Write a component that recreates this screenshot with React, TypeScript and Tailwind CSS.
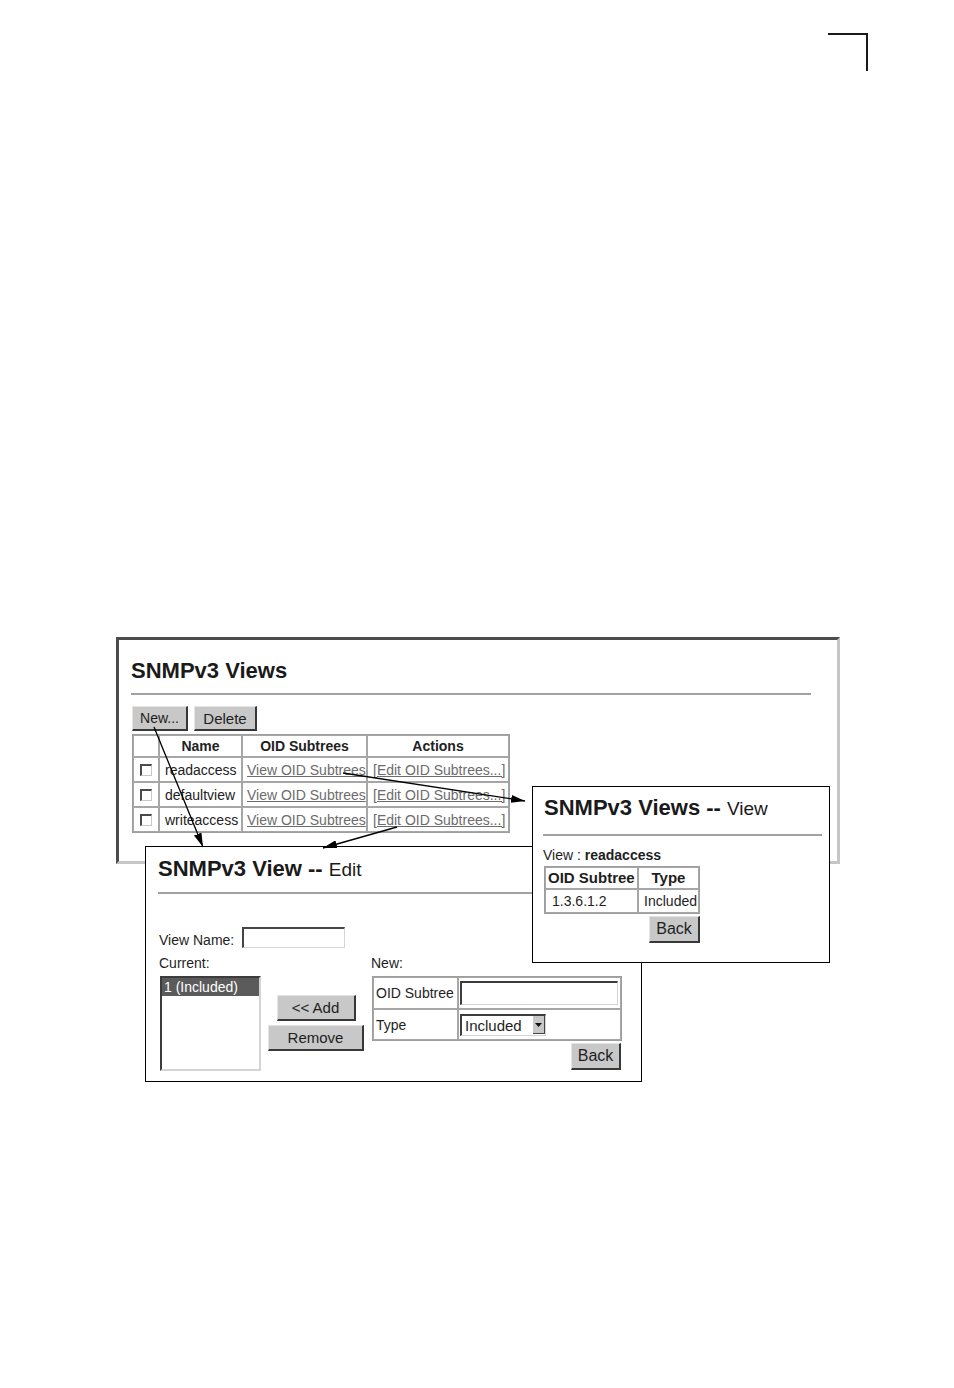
import React from 'react';

const Btn: React.FC<{ className?: string; children: React.ReactNode }> = ({ className = '', children }) => (
  <button
    type="button"
    className={`flex items-center justify-center bg-[#c8c8c8] border border-r-2 border-b-2 border-t-[#e4e4e4] border-l-[#e4e4e4] border-r-[#383838] border-b-[#383838] text-[#1e1e1e] leading-none ${className}`}
  >
    {children}
  </button>
);

const Check = () => (
  <span className="block w-[12px] h-[12px] mx-auto bg-white border-t-2 border-l-2 border-r border-b border-t-[#4a4a4a] border-l-[#4a4a4a] border-r-[#c8c8c8] border-b-[#c8c8c8]" />
);

// cell border only; padding is set per cell
const cell = 'border border-[#a6a6a6] whitespace-nowrap';
const link = 'text-[#6c6c6c] underline';

const rows = ['readaccess', 'defaultview', 'writeaccess'];

const MainWindow = () => (
  <div className="absolute left-0 top-0 w-[724px] h-[227px] bg-white border-t-[3px] border-l-[3px] border-r-[3px] border-b-[3px] border-t-[#4c4c4c] border-l-[#4c4c4c] border-r-[#c6c6c6] border-b-[#c6c6c6] pl-[12px] pt-[18px]">
    <h1 className="text-[22px] leading-[25px] font-bold text-[#1a1a1a]">SNMPv3 Views</h1>
    <div className="mt-[10px] h-[2px] w-[680px] bg-[#a2a2a2]" />
    <div className="mt-[11px] ml-[1px] flex gap-[6px]">
      <Btn className="w-[56px] h-[25px] text-[14px]">New...</Btn>
      <Btn className="w-[63px] h-[25px] text-[15px]">Delete</Btn>
    </div>
    <table className="mt-[3px] ml-[1px] w-[376px] table-fixed border-separate border-spacing-0 border border-[#9e9e9e] text-[14px] leading-[16px] text-[#222]">
      <thead>
        <tr className="h-[22px]">
          <th className={`${cell} w-[26px]`} />
          <th className={`${cell} w-[83px] font-bold text-center`}>Name</th>
          <th className={`${cell} w-[125px] font-bold text-center`}>OID Subtrees</th>
          <th className={`${cell} w-[142px] font-bold text-center`}>Actions</th>
        </tr>
      </thead>
      <tbody>
        {rows.map((r) => (
          <tr key={r} className="h-[25px]">
            <td className={cell}>
              <Check />
            </td>
            <td className={`${cell} pl-[5px]`}>{r}</td>
            <td className={`${cell} pl-[4px]`}>
              <span className={link}>View OID Subtrees</span>
            </td>
            <td className={`${cell} pl-[5px]`}>
              <span className={link}>[Edit OID Subtrees...]</span>
            </td>
          </tr>
        ))}
      </tbody>
    </table>
  </div>
);

const EditWindow = () => (
  <div className="absolute left-[29px] top-[209px] w-[497px] h-[236px] bg-white border border-black pl-[12px] pt-[9px] text-[#1e1e1e]">
    <h2 className="leading-[25px] text-[#1a1a1a]">
      <span className="text-[22px] font-bold">SNMPv3 View -- </span>
      <span className="text-[19px]">Edit</span>
    </h2>
    <div className="mt-[9px] h-[2px] w-[471px] bg-[#a2a2a2]" />
    <div className="mt-[33px] ml-[1px] flex items-end h-[21px] text-[14px]">
      <span className="leading-[16px]">View Name:</span>
      <span className="ml-[8px] block w-[103px] h-[21px] bg-white border-t-2 border-l-2 border-r border-b border-t-[#444] border-l-[#444] border-r-[#d6d6d6] border-b-[#d6d6d6]" />
    </div>
    <div className="mt-[7px] ml-[1px] flex gap-[7px] text-[14px]">
      <div className="w-[102px]">
        <div className="leading-[16px]">Current:</div>
        <div className="mt-[5px] ml-[1px] w-[101px] h-[95px] bg-white border-t-2 border-l-2 border-r-2 border-b-2 border-t-[#3c3c3c] border-l-[#3c3c3c] border-r-[#d4d4d4] border-b-[#d4d4d4]">
          <div className="h-[18px] bg-[#5b5b5b] text-white leading-[18px] px-[2px]">1 (Included)</div>
        </div>
      </div>
      <div className="w-[96px] pt-[40px] flex flex-col items-center gap-[4px]">
        <Btn className="w-[79px] h-[26px] text-[15px]">&lt;&lt; Add</Btn>
        <Btn className="w-[96px] h-[26px] text-[15px]">Remove</Btn>
      </div>
      <div className="w-[250px]">
        <div className="leading-[16px]">New:</div>
        <table className="mt-[5px] ml-[1px] w-[250px] table-fixed border-separate border-spacing-0 border border-[#9e9e9e] leading-[16px]">
          <tbody>
            <tr className="h-[32px]">
              <td className={`${cell} w-[85px] pl-[2px]`}>OID Subtree</td>
              <td className={`${cell} pl-[1px]`}>
                <span className="block w-[158px] h-[24px] bg-white border-t-2 border-l-2 border-r border-b border-t-[#3c3c3c] border-l-[#3c3c3c] border-r-[#d4d4d4] border-b-[#d4d4d4]" />
              </td>
            </tr>
            <tr className="h-[31px]">
              <td className={`${cell} pl-[2px]`}>Type</td>
              <td className={`${cell} pl-[1px]`}>
                <span className="flex items-center w-[86px] h-[22px] bg-white border-t-2 border-l-2 border-r border-b border-t-[#3c3c3c] border-l-[#3c3c3c] border-r-[#d4d4d4] border-b-[#d4d4d4]">
                  <span className="flex-1 pl-[3px] text-[15px] leading-none">Included</span>
                  <span className="flex items-center justify-center w-[12px] h-[18px] bg-[#c8c8c8] border-r border-b border-[#444]">
                    <svg width="7" height="4" viewBox="0 0 7 4">
                      <path d="M0 0 L7 0 L3.5 4 Z" fill="#111" />
                    </svg>
                  </span>
                </span>
              </td>
            </tr>
          </tbody>
        </table>
        <div className="mt-[2px] flex justify-end">
          <Btn className="w-[50px] h-[27px] text-[16px]">Back</Btn>
        </div>
      </div>
    </div>
  </div>
);

const ViewWindow = () => (
  <div className="absolute left-[416px] top-[149px] w-[298px] h-[177px] bg-white border border-black pl-[10px] pt-[8px] text-[#1e1e1e]">
    <h2 className="ml-[1px] leading-[25px] text-[#1a1a1a]">
      <span className="text-[22px] font-bold">SNMPv3 Views -- </span>
      <span className="text-[19px]">View</span>
    </h2>
    <div className="mt-[12px] h-[2px] w-[279px] bg-[#a2a2a2]" />
    <div className="mt-[11px] text-[14px] leading-[16px]">
      View : <span className="font-bold">readaccess</span>
    </div>
    <div className="mt-[3px] ml-[1px] inline-flex flex-col items-end">
      <table className="w-[156px] table-fixed border-separate border-spacing-0 border border-[#9e9e9e] text-[14px] leading-[16px]">
        <thead>
          <tr className="h-[22px]">
            <th className={`${cell} w-[93px] pl-[2px] font-bold text-[15px] text-left`}>OID Subtree</th>
            <th className={`${cell} font-bold text-[15px] text-center`}>Type</th>
          </tr>
        </thead>
        <tbody>
          <tr className="h-[24px]">
            <td className={`${cell} pl-[6px]`}>1.3.6.1.2</td>
            <td className={`${cell} pr-[1px] text-right`}>Included</td>
          </tr>
        </tbody>
      </table>
      <Btn className="mt-[2px] w-[51px] h-[27px] text-[16px]">Back</Btn>
    </div>
  </div>
);

const Arrows = () => (
  <svg className="absolute inset-0 pointer-events-none" width="724" height="445" viewBox="0 0 724 445">
    <defs>
      <marker id="head" viewBox="0 0 14 8" refX="14" refY="4" markerWidth="14" markerHeight="8" markerUnits="userSpaceOnUse" orient="auto">
        <path d="M0 0 L14 4 L0 8 Z" fill="#000" />
      </marker>
    </defs>
    <line x1="38" y1="90" x2="87" y2="210" stroke="#000" strokeWidth="1.3" markerEnd="url(#head)" />
    <line x1="227" y1="136" x2="409" y2="164" stroke="#000" strokeWidth="1.3" markerEnd="url(#head)" />
    <line x1="281" y1="190" x2="207" y2="211" stroke="#000" strokeWidth="1.3" markerEnd="url(#head)" />
  </svg>
);

export default function App() {
  return (
    <div className="w-[954px] h-[1388px] bg-white overflow-hidden font-['Liberation_Sans',Arial,sans-serif]">
      <div className="ml-[828px] mt-[33px] w-[40px] h-[38px] border-t-2 border-r-2 border-[#1a1a1a]" />
      <div className="relative ml-[116px] mt-[566px] w-[724px] h-[445px]">
        <MainWindow />
        <EditWindow />
        <ViewWindow />
        <Arrows />
      </div>
    </div>
  );
}
